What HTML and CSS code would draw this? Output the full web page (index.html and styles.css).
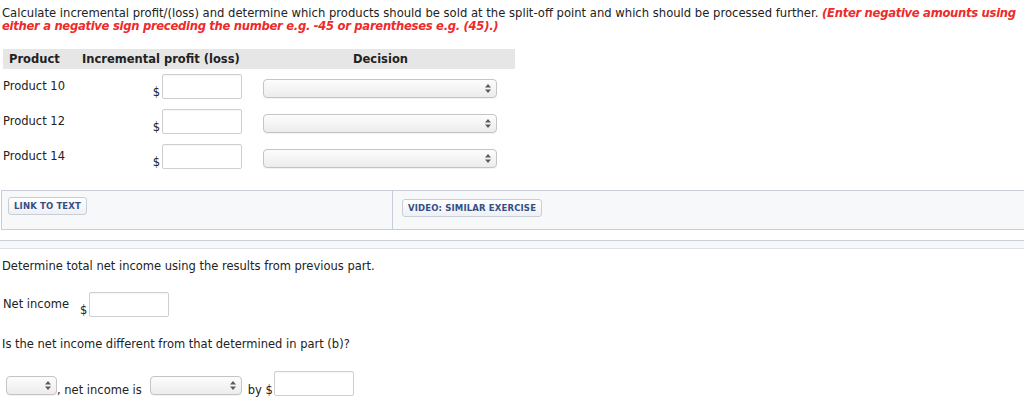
FILE: index.html
```html
<!DOCTYPE html>
<html>
<head>
<meta charset="utf-8">
<link rel="stylesheet" href="styles.css">
</head>
<body>
<p class="intro">Calculate incremental profit/(loss) and determine which products should be sold at the split-off point and which should be processed further. <em class="warn">(Enter negative amounts using either a negative sign preceding the number e.g. -45 or parentheses e.g. (45).)</em></p>

<div class="grid">
  <div class="head">
    <div class="h-prod">Product</div>
    <div class="h-inc">Incremental profit (loss)</div>
    <div class="h-dec">Decision</div>
  </div>
  <div class="row">
    <div class="lbl">Product 10</div>
    <div class="amt"><span class="cur">$</span><span class="inp"></span></div>
    <div class="sel wide"><svg class="arr" width="6" height="9" viewBox="0 0 6 9"><path d="M3 0L6 3.5H0Z M3 9L6 5.5H0Z" fill="#5a5a5a"/></svg></div>
  </div>
  <div class="row">
    <div class="lbl">Product 12</div>
    <div class="amt"><span class="cur">$</span><span class="inp"></span></div>
    <div class="sel wide"><svg class="arr" width="6" height="9" viewBox="0 0 6 9"><path d="M3 0L6 3.5H0Z M3 9L6 5.5H0Z" fill="#5a5a5a"/></svg></div>
  </div>
  <div class="row">
    <div class="lbl">Product 14</div>
    <div class="amt"><span class="cur">$</span><span class="inp"></span></div>
    <div class="sel wide"><svg class="arr" width="6" height="9" viewBox="0 0 6 9"><path d="M3 0L6 3.5H0Z M3 9L6 5.5H0Z" fill="#5a5a5a"/></svg></div>
  </div>
</div>

<div class="links">
  <div class="cell left"><span class="btn">LINK TO TEXT</span></div>
  <div class="cell right"><span class="btn">VIDEO: SIMILAR EXERCISE</span></div>
</div>

<div class="sep"></div>

<p class="q">Determine total net income using the results from previous part.</p>

<div class="net">
  <div class="net-lbl">Net income</div>
  <span class="cur">$</span><span class="inp"></span>
</div>

<p class="q q2">Is the net income different from that determined in part (b)?</p>

<div class="last">
  <div class="sel s1"><svg class="arr" width="6" height="9" viewBox="0 0 6 9"><path d="M3 0L6 3.5H0Z M3 9L6 5.5H0Z" fill="#5a5a5a"/></svg></div>
  <span class="txt">, net income is</span>
  <div class="sel s2"><svg class="arr" width="6" height="9" viewBox="0 0 6 9"><path d="M3 0L6 3.5H0Z M3 9L6 5.5H0Z" fill="#5a5a5a"/></svg></div>
  <span class="txt by">by $</span><span class="inp"></span>
</div>
</body>
</html>
```

FILE: styles.css
```css
html, body {
  margin: 0;
  padding: 0;
  background: #fff;
}
body {
  font-family: "DejaVu Sans", Verdana, sans-serif;
  font-size: 11.5px;
  line-height: 14px;
  color: #222;
  width: 1024px;
  height: 411px;
  overflow: hidden;
}
.intro {
  margin: 6.5px 0 0 2px;
  padding: 0;
  font-size: 11.6px;
  line-height: 13.5px;
  height: 28px;
}
.warn {
  color: #ee2a2a;
  font-weight: bold;
  font-style: italic;
  letter-spacing: -0.3px;
}
.grid {
  margin: 14.5px 0 0 3px;
  width: 512px;
}
.head {
  display: flex;
  height: 20px;
  line-height: 20px;
  background: #e6e6e6;
  font-weight: bold;
}
.h-prod { width: 73px; padding-left: 6px; }
.h-inc { width: 170px; }
.h-dec { flex: 1; text-align: center; padding-right: 6px; }
.row {
  display: flex;
  align-items: flex-start;
  height: 35px;
}
.head + .row { margin-top: 2px; }
.lbl {
  width: 147px;
  padding-top: 8px;
}
.amt {
  display: flex;
  align-items: flex-end;
  justify-content: flex-end;
  width: 92px;
  margin-top: 3px;
}
.cur {
  line-height: 12px;
  margin-right: 2px;
  padding-bottom: 1px;
}
.inp {
  display: inline-block;
  width: 78px;
  height: 23px;
  border: 1px solid #cfcfcf;
  border-radius: 2px;
  background: #fff;
  box-shadow: inset 0 1px 1px rgba(0,0,0,0.04);
}
.sel {
  position: relative;
  height: 17px;
  border: 1px solid #c4c4c4;
  border-radius: 4px;
  background: linear-gradient(#fdfdfd, #ececec);
  box-shadow: 0 1px 0 rgba(0,0,0,0.05);
}
.arr {
  position: absolute;
  right: 5px;
  top: 4px;
}
.wide {
  width: 232px;
  margin-left: 21px;
  margin-top: 8px;
}
.links {
  display: flex;
  margin: 14px 0 0 1px;
  height: 38px;
  border: 1px solid #c9ccd9;
  border-right: none;
  background: #f7f8fa;
}
.cell { height: 38px; }
.left {
  width: 391px;
  border-right: 1px solid #c9ccd9;
  padding: 6px 0 0 6px;
  box-sizing: border-box;
}
.right {
  flex: 1;
  padding: 8px 0 0 9px;
  box-sizing: border-box;
}
.btn {
  display: inline-block;
  height: 16px;
  line-height: 16px;
  padding: 0 5px;
  border: 1px solid #c8cdd8;
  border-radius: 3px;
  background: linear-gradient(#ffffff, #eef0f4);
  color: #344f85;
  font-size: 8.5px;
  font-weight: bold;
  letter-spacing: 0.15px;
}
.sep {
  margin-top: 10px;
  height: 7px;
  border-top: 1px solid #c9ccd9;
  border-bottom: 1px solid #dde0e8;
  background: #f7f8fa;
}
.q {
  margin: 10px 0 0 2px;
  padding: 0;
}
.net {
  display: flex;
  align-items: flex-end;
  margin: 19px 0 0 3px;
  height: 25px;
}
.net-lbl {
  align-self: flex-start;
  padding-top: 5px;
  width: 77px;
}
.q2 { margin-top: 20px; }
.last {
  display: flex;
  align-items: flex-end;
  margin: 20px 0 0 6px;
  height: 25px;
}
.last .sel { margin-bottom: 1px; }
.s1 { width: 49px; }
.s2 { width: 90px; margin-left: 8px; }
.txt { line-height: 14px; margin-bottom: -1px; }
.by { margin-left: 6px; margin-right: 1px; }
```
